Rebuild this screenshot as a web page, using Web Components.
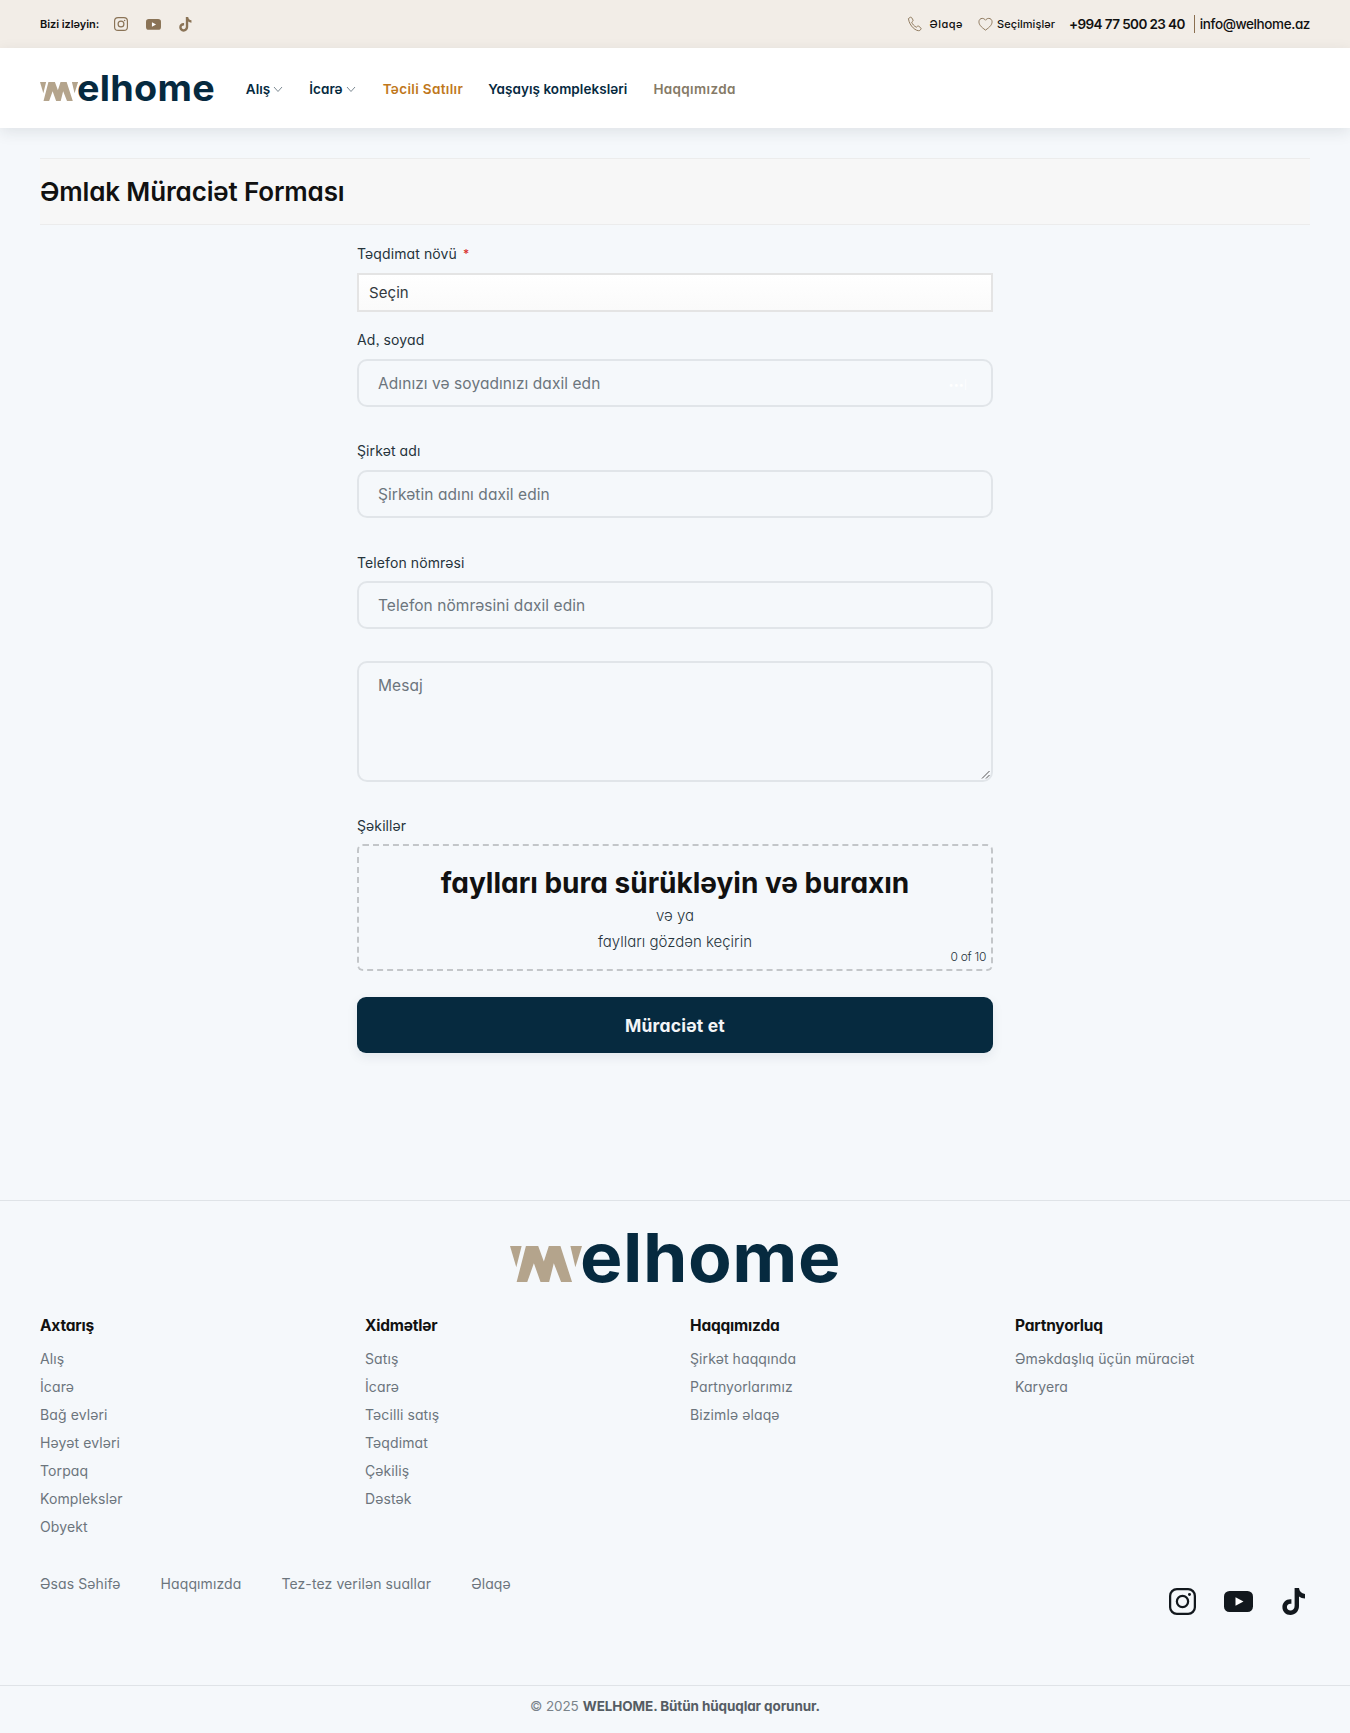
<!DOCTYPE html>
<html lang="az"><head><meta charset="utf-8"><title>Welhome</title>
<style>
html,body{margin:0;padding:0;background:#f5f8fb;}
body{font-family:Inter,"Noto Sans",sans-serif;font-feature-settings:"cv11","ss03";color:#111;width:1350px;}
</style></head><body>
<wh-topbar></wh-topbar>
<wh-nav></wh-nav>
<wh-title>Əmlak Müraciət Forması</wh-title>
<wh-form></wh-form>
<wh-footer></wh-footer>
<script>
const W=`<polygon points="0,0 35,0 19,60"/><polygon points="20,102 48,0 85,0 102,44 117,0 152,0 187,102 154,102 132,49 118,102 92,102 72,49 52,102"/><polygon points="182,0 217,0 197,60"/>`;
const ICONS={
insta:(c,w)=>`<svg viewBox="0 0 24 24" fill="none" stroke="${c}" stroke-width="${w}"><rect x="1" y="1" width="22" height="22" rx="6"/><circle cx="12" cy="12" r="5"/><circle cx="18.2" cy="5.8" r="1.3" fill="${c}" stroke="none"/></svg>`,
yt:(c)=>`<svg viewBox="0 0 29 21"><rect width="29" height="21" rx="5.5" fill="${c}"/><path d="M11.5 6.2 L19.5 10.5 L11.5 14.8Z" fill="#fff"/></svg>`,
tt:(c)=>`<svg viewBox="0 0 24 27"><path d="M12.6 0 H17 C17.3 3.4 19.4 5.6 23 6 V10.4 C20.6 10.4 18.6 9.6 17 8.4 V18 C17 23.2 13.2 27 8.4 27 C3.8 27 .4 23.6 .4 19 C.4 14.2 4.4 10.6 9.4 11.2 V15.8 C6.9 15.2 4.9 16.8 4.9 19 C4.9 21 6.4 22.5 8.4 22.5 C10.8 22.5 12.6 20.8 12.6 18Z" fill="${c}"/></svg>`};
function def(name,html,init){customElements.define(name,class extends HTMLElement{constructor(){super();this.attachShadow({mode:"open"}).innerHTML=typeof html==="function"?html(this):html;}connectedCallback(){init&&init(this)}})}

def("wh-logo",el=>{const h=+el.getAttribute("h")||27;const r=h/52;return `<style>
:host{display:inline-flex;align-items:baseline;height:${h}px;flex:none}
svg{width:${72*r}px;height:${36*r}px;fill:#b4a48c;flex:none;display:block}
span{font:700 ${68*r}px/${h}px Inter,sans-serif;font-feature-settings:normal;color:#062a3f;letter-spacing:${.5*r}px;margin-left:${-2*r}px;margin-right:${12*r}px;display:block;white-space:nowrap;transform:scaleX(1.05);transform-origin:0 50%}
</style><svg viewBox="0 0 217 102" preserveAspectRatio="none">${W}</svg><span>elhome</span>`});

def("wh-topbar",`<style>
:host{display:flex;height:48px;background:#f2ede7;align-items:center;justify-content:space-between;padding:0 40px;font-size:11px;font-weight:500;color:#111;letter-spacing:.05px}
.l,.r{display:flex;align-items:center}
.ic{display:block;width:14px;height:14px;flex:none}
.b{font-size:11px;margin-right:15px;font-weight:600;letter-spacing:-.05px}
.l .ic{margin-right:18px}
.r span{display:block}
.ph{font-size:13.5px;font-weight:600;letter-spacing:-.6px;margin:0 9px 0 14px}
.em{font-size:13.5px;font-weight:500;letter-spacing:-.4px;border-left:1px solid #8a6f50;padding-left:5px;line-height:18px}
.r svg{display:block;width:15px;height:16px;margin-right:6px;flex:none}
</style>
<div class="l"><span class="b">Bizi izləyin:</span>
<span class="ic">${ICONS.insta("#8a7356",2)}</span><span class="ic" style="width:15px;height:11px">${ICONS.yt("#8a7356")}</span><span class="ic" style="width:13px;margin:0">${ICONS.tt("#8a7356")}</span></div>
<div class="r">
<svg viewBox="0 0 16 16" fill="none" stroke="#8a7356" stroke-width="1" style="margin-right:8px"><path d="M1.5 2.2 L3.6 .8 C4.2 .5 4.6 .7 5 1.3 L6.4 3.7 C6.6 4.2 6.5 4.6 6.1 5 L5 6 C5.6 8 7.8 10.6 10 11.4 L11.1 10.4 C11.5 10.1 12 10 12.4 10.3 L14.6 12 C15.1 12.4 15.2 12.9 14.9 13.4 L13.6 15 C10 16.2 2.6 10.4 1.5 2.2Z"/></svg><span style="letter-spacing:.5px">Əlaqə</span>
<span style="width:15px"></span>
<svg viewBox="0 0 16 16" fill="none" stroke="#8a7356" stroke-width="1" style="margin-right:4px"><path d="M8 14.5 C3 11 1 8.6 1 5.6 C1 3.4 2.7 2 4.5 2 C6 2 7.2 2.8 8 4 C8.8 2.8 10 2 11.5 2 C13.3 2 15 3.4 15 5.6 C15 8.6 13 11 8 14.5Z"/></svg><span>Seçilmişlər</span>
<span class="ph">+994 77 500 23 40</span><span class="em">info@welhome.az</span></div>`);

def("wh-nav",`<style>
:host{display:flex;height:80px;background:#fff;align-items:center;padding:0 40px;box-shadow:0 4px 14px rgba(30,40,50,.1);position:relative;font-size:13.5px;font-weight:600;color:#062a3f;letter-spacing:.05px}
wh-logo{margin:2px 31px 0 0}
a{display:flex;align-items:center;color:inherit;margin-right:26px;white-space:nowrap;padding-top:2px}
svg{width:10px;height:7px;margin-left:3px}
</style>
<wh-logo h="27.5"></wh-logo>
<a>Alış<svg viewBox="0 0 10 7" fill="none" stroke="#7d8a93"><path d="M1 1 L5 5.5 L9 1"/></svg></a>
<a style="margin-right:27px">İcarə<svg viewBox="0 0 10 7" fill="none" stroke="#7d8a93"><path d="M1 1 L5 5.5 L9 1"/></svg></a>
<a style="color:#c0781c;letter-spacing:.35px;margin-right:25px">Təcili Satılır</a>
<a style="margin-right:26px">Yaşayış kompleksləri</a>
<a style="color:#857a66;letter-spacing:.35px">Haqqımızda</a>`);

def("wh-title",`<style>
:host{display:flex;align-items:center;height:65px;margin:30px 40px 0;background:#f7f7f7;border-top:1px solid #ececec;border-bottom:1px solid #ececec;font-size:26px;font-weight:600;color:#111;letter-spacing:-.15px;}
</style><slot></slot>`);

def("wh-form",`<style>
:host{display:block;width:636px;margin:19px auto 0;height:956px}
label{display:block;height:20px;line-height:20px;font-size:14px;font-weight:400;color:#26343c;letter-spacing:.1px}
label b{color:#d9302c;font-weight:500;font-size:12px;vertical-align:1px;margin-left:2px}
.box{margin-top:9px;box-sizing:border-box;height:48px;border:2px solid #e1e5e9;border-radius:10px;display:flex;align-items:center;padding:0 19px;font-size:15.5px;color:#6c757d;letter-spacing:.07px;position:relative}
.sel{height:39px;border-radius:0;background:linear-gradient(#fff,#fafafa);border-color:#e4e4e4;color:#33393e;padding:0 10px;font-size:15px}
.area{height:121px;align-items:flex-start;padding-top:13px;margin-top:32px}
.dots{position:absolute;right:24px;top:19px;color:#fff;font-size:9px;line-height:9px}
.area svg{position:absolute;right:1px;bottom:1px;width:9px;height:9px}
.gap1{margin-top:18px}.gap2{margin-top:34px}
.tel{margin-top:35px}.tel + .box{margin-top:8px}
.drop{box-sizing:border-box;height:127px;margin-top:8px;border:2px dashed #c3c6c9;border-radius:6px;position:relative;text-align:center;color:#26343c}
.drop h3{margin:0 0 3px;font-size:28px;font-weight:700;line-height:34px;padding-top:20px;color:#111;letter-spacing:0}
.drop p{margin:0;font-size:15px;font-weight:300;line-height:26px}
.drop small{position:absolute;right:5px;bottom:5px;font-size:12px;font-weight:300;line-height:14px;letter-spacing:-.3px;color:#26343c}
button{display:block;width:100%;height:56px;margin-top:26px;background:#062a3f;color:#f3f5f7;border:0;border-radius:9px;font:700 17.5px Inter,sans-serif;font-feature-settings:"cv11";letter-spacing:.2px;box-shadow:0 4px 12px rgba(6,42,63,.08)}
</style>
<label>Təqdimat növü <b>*</b></label><div class="box sel" role="combobox">Seçin</div>
<label class="gap1">Ad, soyad</label><div class="box" role="textbox">Adınızı və soyadınızı daxil edn<span class="dots">•••|</span></div>
<label class="gap2">Şirkət adı</label><div class="box" role="textbox">Şirkətin adını daxil edin</div>
<label class="tel">Telefon nömrəsi</label><div class="box" role="textbox">Telefon nömrəsini daxil edin</div>
<div class="box area" role="textbox">Mesaj<svg viewBox="0 0 9 9" stroke="#555" fill="none"><path d="M1 8.5L8.5 1M5 8.5L8.5 5"/></svg></div>
<label style="margin-top:34px">Şəkillər</label>
<div class="drop"><h3>faylları bura sürükləyin və buraxın</h3><p>və ya</p><p>faylları gözdən keçirin</p><small>0 of 10</small></div>
<button>Müraciət et</button>`);

def("wh-foot-col",`<style>
:host{display:block;flex:none;width:325px;font-size:14px;color:#6c757d;letter-spacing:.1px}
h4{margin:0 0 7.5px;font-size:15.5px;line-height:22px;font-weight:700;color:#111;letter-spacing:-.2px}
::slotted(a){display:block;height:28px;line-height:28px}
</style><h4></h4><slot></slot>`,el=>{el.shadowRoot.querySelector("h4").textContent=el.getAttribute("title")});

def("wh-footer",`<style>
:host{display:block;border-top:1px solid #dfe3e7;color:#6c757d;font-size:14px;height:533px;box-sizing:border-box}
.logo{display:flex;justify-content:center;padding-top:30px;height:74px}
.cols{display:flex;margin:0 40px;padding-top:10px;height:251px}
.bot{display:flex;justify-content:space-between;margin:0 40px;height:119px}
.links{display:flex;gap:40px;padding-top:8px;letter-spacing:.1px;line-height:20px;height:20px}
.soc{display:flex;align-items:center;height:27px;margin-top:22px;padding-right:4px}
.soc span{display:block;flex:none}
.copy{border-top:1px solid #dfe3e7;height:40px;padding-bottom:7px;display:flex;align-items:center;justify-content:center;font-size:13.5px;letter-spacing:-.1px;color:#7a838a}
.copy b{font-weight:700;color:#555d64;margin-left:4px}
a{display:block}
</style>
<div class="logo"><wh-logo h="52"></wh-logo></div>
<div class="cols">
<wh-foot-col title="Axtarış"><a>Alış</a><a>İcarə</a><a>Bağ evləri</a><a>Həyət evləri</a><a>Torpaq</a><a>Komplekslər</a><a>Obyekt</a></wh-foot-col>
<wh-foot-col title="Xidmətlər"><a>Satış</a><a>İcarə</a><a>Təcilli satış</a><a>Təqdimat</a><a>Çəkiliş</a><a>Dəstək</a></wh-foot-col>
<wh-foot-col title="Haqqımızda"><a>Şirkət haqqında</a><a>Partnyorlarımız</a><a>Bizimlə əlaqə</a></wh-foot-col>
<wh-foot-col title="Partnyorluq" style="width:295px"><a>Əməkdaşlıq üçün müraciət</a><a>Karyera</a></wh-foot-col>
</div>
<div class="bot"><div class="links"><a>Əsas Səhifə</a><a>Haqqımızda</a><a>Tez-tez verilən suallar</a><a>Əlaqə</a></div>
<div class="soc"><span style="width:27px;height:27px;margin-right:28px">${ICONS.insta("#12181d",2)}</span><span style="width:29px;height:21px;margin-right:29px">${ICONS.yt("#12181d")}</span><span style="width:24px;height:27px">${ICONS.tt("#12181d")}</span></div></div>
<div class="copy">© 2025 <b>WELHOME. Bütün hüquqlar qorunur.</b></div>`);
</script>
</body></html>
